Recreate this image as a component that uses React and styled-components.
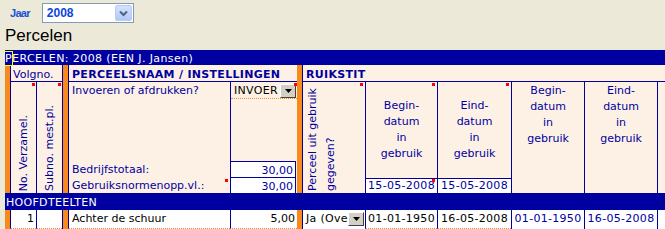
import React from "react";
import styled, { createGlobalStyle } from "styled-components";

// COLOURS

const BLUE = "#0000a0";
const ORANGE = "#f7891d";
const PEACH = "#fdf1e5";
const BEIGE = "#ece9d8";
const RED = "#ff0000";

const COLUMNS =
  "5px 26px 26px 6px 162px 67px 5px 63px 72px 74px 73px 73px 60px";

// STYLES

const GlobalStyle = createGlobalStyle`
  html, body {
    margin: 0;
    padding: 0;
    background: ${BEIGE};
    overflow: hidden;
  }
`;

const Page = styled.div`
  width: 665px;
  height: 229px;
  overflow: hidden;
  background: ${BEIGE};
`;

const YearBar = styled.div`
  display: flex;
  align-items: center;
  gap: 12px;
  height: 20px;
  padding: 3px 0 0 10px;
`;

const YearLabel = styled.span`
  font: bold 11px "Liberation Sans", Arial, sans-serif;
  letter-spacing: -0.7px;
  color: #1a55d6;
`;

const YearSelect = styled.div`
  display: flex;
  align-items: center;
  box-sizing: border-box;
  width: 92px;
  height: 20px;
  padding: 1px;
  border: 1px solid #7f9db9;
  background: #fff;
`;

const YearValue = styled.span`
  flex: 1;
  padding-left: 3px;
  font: bold 12px "Liberation Sans", Arial, sans-serif;
  color: #0a46e0;
`;

const YearButton = styled.span`
  display: flex;
  align-items: center;
  justify-content: center;
  box-sizing: border-box;
  width: 17px;
  height: 16px;
  border: 1px solid #b8cbf6;
  border-radius: 2px;
  background: linear-gradient(#d6e2fd, #b4c8f6);
`;

const Heading = styled.h1`
  box-sizing: border-box;
  height: 27px;
  margin: 0;
  padding: 3px 0 0 5px;
  font: normal 17px/20px "Liberation Sans", Arial, sans-serif;
  color: #000;
`;

const Sheet = styled.div`
  width: 660px;
  margin-left: 5px;
  overflow: hidden;
  font: 11px "DejaVu Sans", Verdana, sans-serif;
  color: ${BLUE};
`;

const TitleBar = styled.div`
  box-sizing: border-box;
  height: 15px;
  padding-top: 2px;
  line-height: 13px;
  letter-spacing: 0.4px;
  background: ${BLUE};
  color: #fff;
  white-space: nowrap;
`;

const Caret = styled.span`
  outline: 1px solid #ffff00;
  outline-offset: 0;
`;

const Grid = styled.div`
  display: grid;
  grid-template-columns: ${COLUMNS};
  grid-template-rows: 17px 111px 17px 19px;
  width: 712px;
  background: ${PEACH};
`;

const Bar = styled.div`
  grid-column: ${(p) => p.$col};
  grid-row: ${(p) => p.$row};
  background: ${ORANGE};
  border-left: ${(p) => (p.$edge ? `1px solid ${BLUE}` : "none")};
`;

const HeadCell = styled.div`
  grid-column: ${(p) => p.$col};
  grid-row: 1;
  padding: 2px 0 0 ${(p) => p.$pad}px;
  border-left: 1px solid ${BLUE};
  border-bottom: 1px solid ${BLUE};
  font-weight: ${(p) => (p.$bold ? "bold" : "normal")};
  letter-spacing: ${(p) => (p.$bold ? 0.3 : 0)}px;
  line-height: 15px;
  white-space: nowrap;
  overflow: hidden;
`;

const Column = styled.div`
  position: relative;
  grid-column: ${(p) => p.$col};
  grid-row: 2;
  display: flex;
  flex-direction: column;
  border-left: ${(p) => (p.$line ? `1px solid ${BLUE}` : "none")};
  min-width: 0;
`;

const VertCell = styled(Column)`
  flex-direction: row;
  align-items: flex-end;
  justify-content: ${(p) => (p.$start ? "flex-start" : "center")};
  padding: 0 0 2px ${(p) => (p.$start ? 1 : 0)}px;
`;

const VertText = styled.span`
  writing-mode: vertical-rl;
  transform: rotate(180deg);
  white-space: nowrap;
  line-height: ${(p) => p.$lh || 16}px;
`;

const Marker = styled.span`
  position: absolute;
  top: ${(p) => p.$top ?? 1}px;
  right: ${(p) => p.$right ?? 1}px;
  width: 3px;
  height: 3px;
  background: ${RED};
`;

const LabelLine = styled.div`
  position: relative;
  height: 16px;
  padding: 1px 0 0 3px;
  box-sizing: border-box;
  line-height: 15px;
  white-space: nowrap;
`;

const Spacer = styled.div`
  flex: 1;
  border-left: ${(p) => (p.$line ? `1px solid ${BLUE}` : "none")};
`;

const ValueCell = styled.div`
  position: relative;
  box-sizing: border-box;
  height: 16px;
  padding: 1px 2px 0 0;
  border: 1px solid ${BLUE};
  border-bottom: 0;
  margin-right: 1px;
  background: #fff;
  text-align: right;
  line-height: 15px;
`;

const Combo = styled.div`
  position: relative;
  display: flex;
  align-items: flex-start;
  box-sizing: border-box;
  height: ${(p) => p.$h}px;
  margin-top: ${(p) => p.$mt || 0}px;
  border-bottom: 1px dotted ${ORANGE};
  background: ${(p) => p.$bg};
  color: #000;
`;

const ComboText = styled.span`
  flex: 1;
  padding: 1px 0 0 3px;
  line-height: 13px;
  letter-spacing: 0.3px;
  white-space: nowrap;
  overflow: hidden;
`;

const ComboButton = styled.span`
  display: flex;
  align-items: center;
  justify-content: center;
  box-sizing: border-box;
  width: 16px;
  height: 14px;
  margin: 1px 1px 0 0;
  background: #d4d0c8;
  border: 1px solid;
  border-color: #fff #404040 #404040 #fff;
`;

const DateHead = styled.div`
  flex: 1;
  display: flex;
  align-items: ${(p) => (p.$top ? "flex-start" : "center")};
  justify-content: center;
  padding-top: ${(p) => (p.$top ? 1 : 0)}px;
  text-align: center;
  line-height: 16px;
`;

const DateCell = styled.div`
  position: relative;
  box-sizing: border-box;
  height: 15px;
  border-top: 1px solid ${BLUE};
  background: #fff;
  text-align: center;
  letter-spacing: 0.3px;
  line-height: 14px;
`;

const Section = styled.div`
  grid-column: 1 / -1;
  grid-row: 3;
  padding: 2px 0 0 1px;
  background: ${BLUE};
  color: #fff;
  letter-spacing: 0.3px;
  line-height: 15px;
`;

const DataCell = styled.div`
  position: relative;
  grid-column: ${(p) => p.$col};
  grid-row: 4;
  box-sizing: border-box;
  height: 19px;
  padding: 1px ${(p) => (p.$align === "right" ? 2 : 0)}px 0
    ${(p) => (p.$align === "left" ? 3 : 0)}px;
  border-left: ${(p) => (p.$line ? `1px solid ${BLUE}` : "none")};
  border-bottom: ${(p) => (p.$edit ? `1px dotted ${ORANGE}` : "none")};
  background: #fff;
  color: ${(p) => (p.$blue ? BLUE : "#000")};
  text-align: ${(p) => p.$align || "left"};
  letter-spacing: ${(p) => (p.$align === "center" ? 0.3 : 0)}px;
  line-height: 15px;
  white-space: nowrap;
  overflow: hidden;
`;

// ICONS

const Chevron = () => (
  <svg width="9" height="7" viewBox="0 0 9 7">
    <polyline
      points="1,1.5 4.5,5 8,1.5"
      fill="none"
      stroke="#4d6185"
      strokeWidth="2"
    />
  </svg>
);

const Triangle = () => (
  <svg width="7" height="4" viewBox="0 0 7 4">
    <polygon points="0,0 7,0 3.5,4" fill="#000" />
  </svg>
);

// DATA

const dateHeads = [
  { col: 9, top: false, date: "15-05-2008", mark: true },
  { col: 10, top: false, date: "15-05-2008", mark: true },
  { col: 11, top: true },
  { col: 12, top: true },
];

const dataDates = [
  { col: 9, value: "01-01-1950", edit: true },
  { col: 10, value: "16-05-2008", edit: true },
  { col: 11, value: "01-01-1950", blue: true },
  { col: 12, value: "16-05-2008", blue: true },
];

// COMPONENT

const DateLabel = ({ first }) => (
  <span>
    {first}
    <br />
    datum
    <br />
    in
    <br />
    gebruik
  </span>
);

export default function App() {
  return (
    <Page>
      <GlobalStyle />
      <YearBar>
        <YearLabel>Jaar</YearLabel>
        <YearSelect>
          <YearValue>2008</YearValue>
          <YearButton>
            <Chevron />
          </YearButton>
        </YearSelect>
      </YearBar>
      <Heading>Percelen</Heading>

      <Sheet>
        <TitleBar>
          <Caret>P</Caret>ERCELEN: 2008 (EEN J. Jansen)
        </TitleBar>
        <Grid>
          {/* header row */}
          <Bar $col="1" $row="1 / 3" />
          <HeadCell $col="2 / 4" $pad={2}>
            Volgno.
          </HeadCell>
          <Bar $col="4" $row="1 / 3" $edge />
          <HeadCell $col="5 / 7" $pad={3} $bold>
            PERCEELSNAAM / INSTELLINGEN
          </HeadCell>
          <Bar $col="7" $row="1 / 3" />
          <HeadCell $col="8 / -1" $pad={3} $bold>
            RUIKSTIT
          </HeadCell>

          {/* column titles */}
          <VertCell $col="2" $line>
            <Marker />
            <VertText>No. Verzamel.</VertText>
          </VertCell>
          <VertCell $col="3" $line>
            <Marker />
            <VertText>Subno. mest.pl.</VertText>
          </VertCell>

          <Column $col="5" $line>
            <LabelLine>Invoeren of afdrukken?</LabelLine>
            <Spacer />
            <LabelLine>Bedrijfstotaal:</LabelLine>
            <LabelLine>
              Gebruiksnormenopp.vl.:
              <Marker $top={2} $right={2} />
            </LabelLine>
          </Column>
          <Column $col="6">
            <Spacer $line>
              <Combo $h={16} $mt={1} $bg={PEACH}>
                <ComboText>INVOER</ComboText>
                <ComboButton>
                  <Triangle />
                </ComboButton>
                <Marker $top={0} $right={0} />
              </Combo>
            </Spacer>
            <ValueCell>30,00</ValueCell>
            <ValueCell>30,00</ValueCell>
          </Column>

          <VertCell $col="8" $line $start>
            <Marker $right={2} />
            <VertText $lh={18}>
              Perceel uit gebruik
              <br />
              gegeven?
            </VertText>
          </VertCell>

          {dateHeads.map((d, i) => (
            <Column key={d.col} $col={String(d.col)} $line>
              {d.mark && <Marker $right={2} />}
              <DateHead $top={d.top}>
                <DateLabel first={i % 2 === 0 ? "Begin-" : "Eind-"} />
              </DateHead>
              {d.date && (
                <DateCell>
                  {d.date}
                  {i === 0 && <Marker $top={0} $right={2} />}
                </DateCell>
              )}
            </Column>
          ))}
          <Column $col="13" $line />

          <Section>HOOFDTEELTEN</Section>

          {/* data row */}
          <Bar $col="1" $row="4" />
          <DataCell $col="2" $line $edit $align="right">
            1
          </DataCell>
          <DataCell $col="3" $line $edit />
          <Bar $col="4" $row="4" $edge />
          <DataCell $col="5" $line $edit $align="left">
            Achter de schuur
          </DataCell>
          <DataCell $col="6" $line $edit $align="right">
            5,00
          </DataCell>
          <Bar $col="7" $row="4" />
          <DataCell $col="8" $line>
            <Combo $h={19} $bg="#fff">
              <ComboText>Ja (Ove</ComboText>
              <ComboButton>
                <Triangle />
              </ComboButton>
            </Combo>
          </DataCell>
          {dataDates.map((d) => (
            <DataCell
              key={d.col}
              $col={String(d.col)}
              $line
              $edit={d.edit}
              $blue={d.blue}
              $align="center"
            >
              {d.value}
            </DataCell>
          ))}
          <DataCell $col="13" $line />
        </Grid>
      </Sheet>
    </Page>
  );
}
